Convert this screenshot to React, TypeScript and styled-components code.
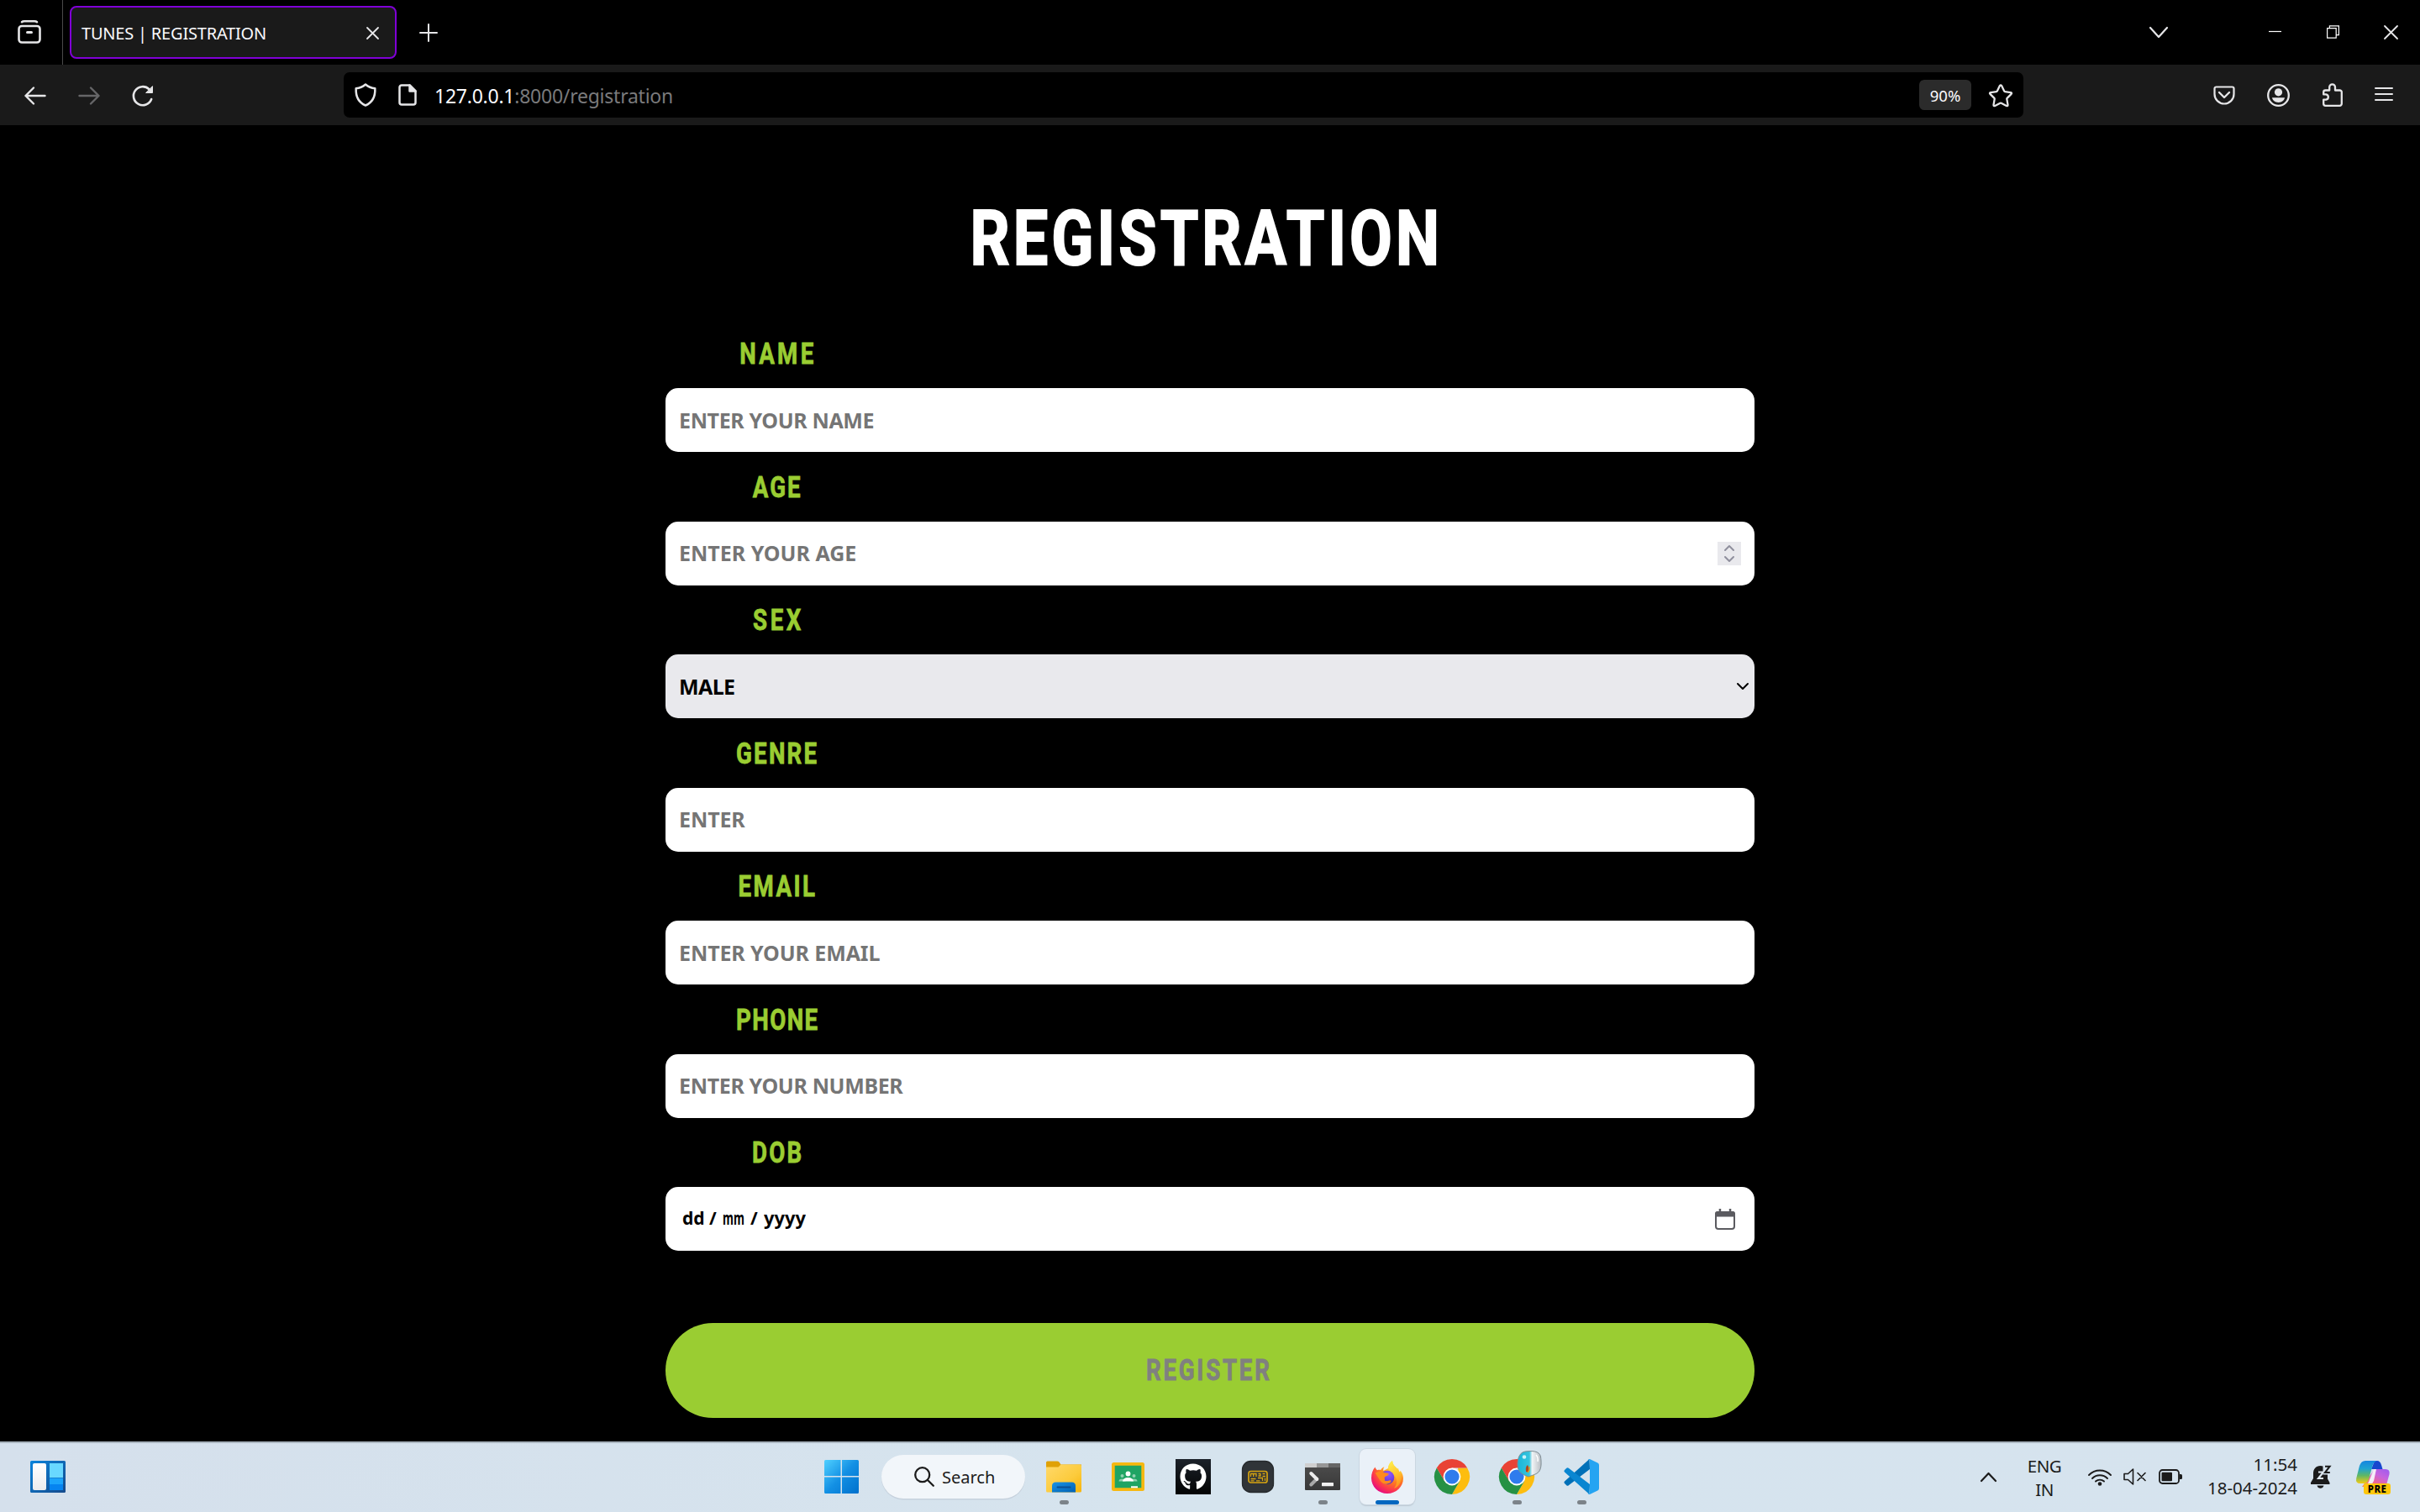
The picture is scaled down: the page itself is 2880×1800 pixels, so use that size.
import React from "react";
import styled, { createGlobalStyle, css } from "styled-components";
import { FaGithub } from "react-icons/fa";

const Global = createGlobalStyle`
  * { box-sizing: border-box; }
  html, body { margin: 0; background: #000; }
  body { font-family: "Noto Sans", "Open Sans", sans-serif; overflow: hidden; }
  svg { display: block; flex: none; overflow: visible; }
`;

const Screen = styled.div`
  width: 2880px;
  height: 1800px;
  display: grid;
  grid-template-rows: 77px 72px 1fr 84px;
  background: #000;
`;

/* ---------- browser chrome ---------- */
const TabBar = styled.header`
  display: flex;
  align-items: center;
  background: #000;
`;
const FirefoxView = styled.div`
  width: 75px;
  height: 77px;
  padding-left: 21px;
  padding-bottom: 1px;
  display: flex;
  align-items: center;
  border-right: 1px solid #4a4a4a;
`;
const Tab = styled.div`
  width: 389px;
  height: 63px;
  margin-left: 8px;
  padding: 2px 19px 0 12px;
  display: flex;
  align-items: center;
  justify-content: space-between;
  border: 2px solid #8000d7;
  border-radius: 8px;
  background: #1a1a1a;
`;
const TabTitle = styled.span`
  padding-top: 1px;
  font-size: 20px;
  letter-spacing: -0.2px;
  line-height: 30px;
  color: #fbfbfe;
`;
const NewTab = styled.div`
  margin-left: 27px;
`;
const WindowControls = styled.div`
  margin-left: auto;
  margin-right: 26px;
  display: flex;
  align-items: center;
`;
const Control = styled.div<{ $before?: number }>`
  margin-left: ${(p) => p.$before ?? 0}px;
  padding-bottom: 1px;
`;
const Toolbar = styled.nav`
  display: flex;
  align-items: center;
  background: #1a1a1a;
  padding: 0 32px 0 29px;
`;
const NavButtons = styled.div`
  display: flex;
  align-items: center;
  gap: 38px;
  width: 380px;
  padding-top: 2px;
`;
const UrlBar = styled.div`
  width: 1999px;
  height: 54px;
  padding: 0 13px 0 13px;
  display: flex;
  align-items: center;
  border-radius: 7px;
  background: #000;
`;
const UrlIcons = styled.div`
  display: flex;
  align-items: center;
  gap: 26px;
  width: 95px;
`;
const Url = styled.span`
  padding-top: 1px;
  font-size: 23px;
  letter-spacing: -0.24px;
  color: #7a7a7c;
`;
const Host = styled.span`
  color: #fbfbfe;
`;
const Zoom = styled.span`
  margin-left: auto;
  width: 62px;
  height: 36px;
  border-radius: 6px;
  background: #2b2b2b;
  color: #fbfbfe;
  font-size: 18.500px;
  line-height: 37px;
  text-align: center;
`;
const StarSlot = styled.div`
  margin-left: 21px;
`;
const ToolbarRight = styled.div`
  margin-left: auto;
  display: flex;
  align-items: center;
  gap: 38.500px;
`;

/* ---------- page ---------- */
const Page = styled.main`
  display: flex;
  flex-direction: column;
  align-items: center;
  padding-top: 66px;
  font-family: Roboto, "Noto Sans", sans-serif;
`;
const Title = styled.h1`
  margin: 0 8px 41px 0;
  font-size: 90px;
  line-height: 140px;
  font-weight: 700;
  letter-spacing: 5px;
  color: #fff;
  -webkit-text-stroke: 2px #fff;
  transform: scaleX(0.818);
`;
const Form = styled.form`
  width: 1296px;
  display: flex;
  flex-direction: column;
`;
const Fields = styled.div`
  display: grid;
  row-gap: 16.500px;
`;
const Field = styled.div`
  display: flex;
  flex-direction: column;
`;
const pixelText = css<{ $track: number }>`
  font-family: Roboto, "Noto Sans", sans-serif;
  font-size: 35px;
  font-weight: 700;
  line-height: 50px;
  letter-spacing: ${(p) => p.$track}px;
  margin-right: -${(p) => p.$track}px;
  -webkit-text-stroke: 0.8px currentColor;
  transform: scaleX(0.79);
`;
const LabelCell = styled.div`
  width: 264px;
  height: 66px;
  padding-top: 1px;
  display: flex;
  justify-content: center;
`;
const Label = styled.label<{ $track: number }>`
  ${pixelText}
  color: #9acd32;
`;
const Box = styled.div<{ $filled?: boolean }>`
  height: 76px;
  padding: 0 23px 0 16px;
  display: flex;
  align-items: center;
  justify-content: space-between;
  border-radius: 15px;
  background: ${(p) => (p.$filled ? "#e9e9ed" : "#fff")};
  ${(p) => p.$filled && "padding-right: 7px;"}
`;
const Value = styled.span<{ $dark?: boolean; $track: number }>`
  padding-bottom: 1px;
  font-family: "Noto Sans", "Open Sans", sans-serif;
  font-size: 25px;
  font-weight: 700;
  letter-spacing: ${(p) => p.$track}px;
  color: ${(p) => (p.$dark ? "#000" : "#757575")};
`;
const Spinner = styled.div`
  width: 28px;
  height: 28px;
  margin-right: -7px;
  display: flex;
  flex-direction: column;
  align-items: center;
  justify-content: center;
  gap: 6px;
  background: #e9e9ed;
`;
const DateValue = styled.span`
  display: flex;
  padding: 0 0 2px 4px;
  font-family: "Noto Sans", "Open Sans", sans-serif;
  font-size: 21px;
  font-weight: 700;
  color: #000;
`;
const DatePart = styled.span<{ $w: number; $squeeze?: number }>`
  display: block;
  width: ${(p) => p.$w}px;
  white-space: pre;
  transform-origin: 0 50%;
  transform: scaleX(${(p) => p.$squeeze ?? 1});
`;
const Submit = styled.button`
  margin-top: 86px;
  height: 113px;
  padding: 1px 6px 0 0;
  border: 0;
  border-radius: 57px;
  background: #9acd32;
  display: flex;
  align-items: center;
  justify-content: center;
  color: #808080;
`;
const SubmitText = styled.span<{ $track: number }>`
  ${pixelText}
`;

/* ---------- taskbar ---------- */
const Taskbar = styled.footer`
  display: flex;
  align-items: center;
  background: linear-gradient(90deg, #d5e0ec, #d6e4ee 50%, #d6e3ee);
  box-shadow: inset 0 2px 0 #a9b4be;
  color: #1b1b1b;
`;
const Widgets = styled.div`
  width: 981px;
  padding-left: 36px;
`;
const SearchPill = styled.div`
  width: 171px;
  height: 52px;
  margin: 0 7px 0 27px;
  padding-left: 39px;
  display: flex;
  align-items: center;
  gap: 9px;
  border-radius: 26px;
  background: #f2f6fa;
  box-shadow: 0 1.5px 0 #c6d1dd;
  font-size: 20px;
`;
const TaskButton = styled.div<{ $active?: boolean }>`
  position: relative;
  width: 66px;
  height: 66px;
  margin: 0 5.5px;
  display: flex;
  align-items: center;
  justify-content: center;
  border-radius: 8px;
  ${(p) => p.$active && "background: #eaf1f8; box-shadow: 0 0 0 1px #cad6e1, 0 2px 1px #bfcad4;"}
`;
const Indicator = styled.i<{ $active?: boolean }>`
  position: absolute;
  bottom: 0;
  left: ${(p) => (p.$active ? 19 : 28)}px;
  width: ${(p) => (p.$active ? 28 : 11)}px;
  height: 5px;
  border-radius: 3px;
  background: ${(p) => (p.$active ? "#0067c0" : "#7c8389")};
`;
const Tray = styled.div`
  margin-left: auto;
  padding-right: 35px;
  display: flex;
  align-items: center;
`;
const TrayText = styled.div<{ $w: number; $right?: boolean; $dy: number }>`
  width: ${(p) => p.$w}px;
  padding-top: ${(p) => Math.max(p.$dy, 0)}px;
  padding-bottom: ${(p) => Math.max(-p.$dy, 0)}px;
  display: flex;
  flex-direction: column;
  align-items: ${(p) => (p.$right ? "flex-end" : "center")};
  font-size: 20.5px;
  line-height: 28px;
  letter-spacing: ${(p) => (p.$right ? 0 : -0.5)}px;
`;
const TraySlot = styled.div<{ $gap: number }>`
  margin-left: ${(p) => p.$gap}px;
`;

const ink = "#e6e6e8";
const line = { fill: "none", strokeLinecap: "round" as const, strokeLinejoin: "round" as const };

const ViewIcon = () => (
  <svg width="28" height="28" viewBox="0 0 28 28" {...line} stroke={ink} strokeWidth="2.6">
    <path d="M5 2.2Q6 1.3 8 1.3h12q2 0 3 .9" />
    <rect x="1.5" y="7" width="25" height="19.5" rx="3.5" />
    <path d="M11.5 14.5h5" strokeWidth="3" />
  </svg>
);
const Cross = ({ s, w = 2 }: { s: number; w?: number }) => (
  <svg width={s} height={s} viewBox={`0 0 ${s} ${s}`} {...line} stroke={ink} strokeWidth={w}>
    <path d={`M1 1L${s - 1} ${s - 1}M${s - 1} 1L1 ${s - 1}`} />
  </svg>
);
const Plus = () => (
  <svg width="22" height="22" viewBox="0 0 22 22" {...line} stroke={ink} strokeWidth="2">
    <path d="M11 1v20M1 11h20" />
  </svg>
);
const Chevron = ({ w, h, up, color, sw }: { w: number; h: number; up?: boolean; color: string; sw: number }) => (
  <svg width={w} height={h} viewBox={`0 0 ${w} ${h}`} {...line} stroke={color} strokeWidth={sw}>
    <path d={up ? `M1 ${h - 1}L${w / 2} 1L${w - 1} ${h - 1}` : `M1 1L${w / 2} ${h - 1}L${w - 1} 1`} />
  </svg>
);
const Minimize = () => (
  <svg width="15" height="16" viewBox="0 0 15 16"><path d="M0 7.500h15" stroke="#fff" strokeWidth="1.2" /></svg>
);
const Restore = () => (
  <svg width="15" height="16" viewBox="0 0 15 16" fill="none" stroke="#fff" strokeWidth="1.2">
    <path d="M.6 3.6h10.6v11.6H.6zM3.4 3.4V.8h11v10.8h-3" />
  </svg>
);
const Arrow = ({ right }: { right?: boolean }) => (
  <svg width="26" height="22" viewBox="0 0 26 22" {...line} stroke={right ? "#666668" : ink} strokeWidth="2.4">
    <path d={right ? "M1.5 11h23M15 1.5l9.5 9.5-9.5 9.5" : "M24.5 11h-23M11 1.5L1.5 11l9.500 9.500"} />
  </svg>
);
const Reload = () => (
  <svg width="26" height="26" viewBox="0 0 26 26" {...line} stroke={ink} strokeWidth="2.6">
    <path d="M23.2 17A11 11 0 1 1 20.5 5.2" />
    <path d="M24.5 2v7.5h-7.5z" fill={ink} stroke={ink} strokeWidth="1" />
  </svg>
);
const Shield = () => (
  <svg width="26" height="28" viewBox="0 0 26 28" {...line} stroke={ink} strokeWidth="2.5">
    <path d="M13 1.500c3.500 3 7 4.300 11.300 4.700.5 9.300-2.300 16.300-11.300 20.300C4 22.500 1.200 15.500 1.700 6.200 6 5.800 9.500 4.500 13 1.500z" />
  </svg>
);
const PageIcon = () => (
  <svg width="22" height="26" viewBox="0 0 22 26" {...line} stroke={ink} strokeWidth="2.5">
    <path d="M4 1.500h9.500l7 7V22a2.500 2.500 0 0 1-2.500 2.500H4A2.500 2.500 0 0 1 1.500 22V4A2.500 2.500 0 0 1 4 1.500z" />
    <path d="M13.500 1.500v7h7z" fill={ink} />
  </svg>
);
const Star = () => (
  <svg width="28" height="27" viewBox="0 0 28 27" {...line} stroke={ink} strokeWidth="2.3">
    <path d="M12.900 2.100q1.100-1.600 2.200 0l3.100 6.400q.3.500.9.600l6.900 1q1.700.4.600 1.800l-5 5q-.4.400-.3 1l1.200 7q0 1.700-1.700 1.100l-6.200-3.300q-.6-.3-1.200 0l-6.200 3.300q-1.700.6-1.700-1.100l1.200-7q.1-.6-.3-1l-5-5q-1.100-1.400.6-1.800l6.900-1q.6-.1.900-.6z" />
  </svg>
);
const Pocket = () => (
  <svg width="26" height="23" viewBox="0 0 26 23" {...line} stroke={ink} strokeWidth="2.2">
    <path d="M3.500 1.500h19a2 2 0 0 1 2 2V10a11.500 11.500 0 0 1-23 0V3.500a2 2 0 0 1 2-2z" />
    <path d="M7 8l6 6 6-6" strokeWidth="2.4" />
  </svg>
);
const Account = () => (
  <svg width="27" height="27" viewBox="0 0 27 27" fill={ink}>
    <circle cx="13.5" cy="13.5" r="12.3" fill="none" stroke={ink} strokeWidth="2.3" />
    <circle cx="13.5" cy="9.8" r="4.6" />
    <path d="M6 16.300h15c-.6 3.300-3.400 5.600-7.500 5.600S6.600 19.600 6 16.300z" />
  </svg>
);
const Extension = () => (
  <svg width="24" height="28" viewBox="0 0 24 28" {...line} stroke={ink} strokeWidth="2.3">
    <path d="M3.500 8.500h4.700V4.800a3.400 3.400 0 0 1 6.800 0v3.700h5.500a2.300 2.300 0 0 1 2.300 2.300v13.700a2.300 2.300 0 0 1-2.300 2.300h-17a2.300 2.300 0 0 1-2.300-2.300v-4.800h3a3.200 3.200 0 0 0 0-6.300h-3v-2.600a2.300 2.300 0 0 1 2.300-2.300z" />
  </svg>
);
const Menu = () => (
  <svg width="22" height="18" viewBox="0 0 22 18" {...line} stroke={ink} strokeWidth="2">
    <path d="M1 1h20M1 8h20M1 15h20" />
  </svg>
);
const Calendar = () => (
  <svg width="24" height="25" viewBox="0 0 24 25">
    <rect x="1" y="4" width="22" height="20" rx="3" fill="none" stroke="#5b5b60" strokeWidth="2" />
    <path d="M0 9.500V6a3 3 0 0 1 3-3h18a3 3 0 0 1 3 3v3.500zM4.700 0h2.500v4H4.700zM16.800 0h2.500v4h-2.500z" fill="#5b5b60" />
  </svg>
);

const WidgetsIcon = () => (
  <svg width="42" height="38" viewBox="0 0 42 38">
    <defs>
      <linearGradient id="wg" x1="0" y1="0" x2="1" y2="1"><stop stopColor="#0a84dc" /><stop offset="1" stopColor="#154a8c" /></linearGradient>
      <linearGradient id="wp" x1="0" y1="0" x2="0" y2="1"><stop stopColor="#fff" /><stop offset="1" stopColor="#ececee" /></linearGradient>
    </defs>
    <rect width="42" height="38" rx="1.5" fill="url(#wg)" />
    <rect x="3" y="3" width="16" height="32" rx="2" fill="url(#wp)" />
    <path d="M23 3h16v17H23z" fill="#69d8ff" />
    <path d="M23 20.500h16V28H23z" fill="#1ba4fb" />
    <path d="M23 28h16v7H23z" fill="#0684f0" />
  </svg>
);
const WindowsIcon = () => (
  <svg width="41" height="40" viewBox="0 0 41 40">
    <defs><linearGradient id="win" gradientUnits="userSpaceOnUse" x1="0" y1="0" x2="41" y2="40"><stop stopColor="#4fd0ff" /><stop offset=".5" stopColor="#1390e4" /><stop offset="1" stopColor="#0070cc" /></linearGradient></defs>
    <path d="M1.500 0H19.500V19H0V1.500Q0 0 1.500 0zM21 0h18.500Q41 0 41 1.500V19H21zM0 20.500h19.500V40h-18Q0 40 0 38.500zM21 20.500h20v18q0 1.500-1.500 1.500H21z" fill="url(#win)" />
  </svg>
);
const SearchGlyph = () => (
  <svg width="24" height="24" viewBox="0 0 24 24" {...line} stroke="#1b1b1b" strokeWidth="2.3">
    <circle cx="9.7" cy="9.7" r="8.5" /><path d="M16 16l6.800 6.800" />
  </svg>
);
const FolderIcon = () => (
  <svg width="42" height="38" viewBox="0 0 42 38">
    <defs>
      <linearGradient id="fo" x1="0" y1="0" x2="1" y2="1"><stop stopColor="#ffd96b" /><stop offset=".6" stopColor="#fccb3c" /><stop offset="1" stopColor="#f7b40c" /></linearGradient>
      <linearGradient id="fb" x1="0" y1="0" x2="1" y2="1"><stop stopColor="#1a93e4" /><stop offset="1" stopColor="#0061b4" /></linearGradient>
    </defs>
    <path d="M0 2Q0 .5 1.500.5H13q1.500 0 2.500 1l2 3H42V14H0z" fill="#e0a106" />
    <path d="M0 7.500h14.500l3-3H40.500q1.500 0 1.500 1.500v30q0 1.500-1.500 1.500h-39Q0 37.500 0 36z" fill="url(#fo)" />
    <path d="M7 37.500V30q0-4.500 4.500-4.500h19Q35 25.500 35 30v7.500z" fill="url(#fb)" />
    <path d="M13.500 31.500h15" stroke="#0a4f93" strokeWidth="2" strokeLinecap="round" />
  </svg>
);
const ClassroomIcon = () => (
  <svg width="39" height="34" viewBox="0 0 39 34">
    <rect width="39" height="34" rx="2.5" fill="#f6b811" />
    <path d="M3.700 3.700h31.600v26.600H3.700z" fill="#1fa463" />
    <g fill="#8fd1b0"><circle cx="12.5" cy="16" r="2" /><circle cx="26.5" cy="16" r="2" /><path d="M8.500 22.500q0-3 4-3t4 3zM22.500 22.500q0-3 4-3t4 3z" /></g>
    <circle cx="19.5" cy="13.5" r="2.9" fill="#fff" /><path d="M13 22.500q.5-4.500 6.500-4.500t6.500 4.500z" fill="#fff" />
    <path d="M23 28.300h8v2h-8z" fill="#fff" />
  </svg>
);
const GithubTile = styled.div`
  width: 42px;
  height: 42px;
  display: flex;
  align-items: center;
  justify-content: center;
  background: linear-gradient(#1b2129, #030303);
  color: #fff;
  font-size: 32px;
`;
const MazeIcon = () => (
  <svg width="38" height="38" viewBox="0 0 38 38" fill="none" stroke="#d6a410" strokeWidth="1.3">
    <rect x=".5" y=".5" width="37" height="37" rx="10" fill="#303438" stroke="#26292c" />
    <rect x="8" y="12.5" width="22" height="13.5" rx="2.5" strokeWidth="1.7" />
    <path d="M10.500 19v-3.500H17V19M13.700 15.500V19M19.500 15.500h3M24.500 15.500h3M19.500 18h2.500v-2.500M24.500 18.500h3.500M10.500 21.500h6M19 20.500h5.500V24M10.500 23.800h4M17 23.800h4.500M27.500 20.500V24" />
  </svg>
);
const TerminalIcon = () => (
  <svg width="42" height="32" viewBox="0 0 42 32">
    <defs><linearGradient id="te" x1="0" y1="0" x2="0" y2="1"><stop stopColor="#4d4d4d" /><stop offset="1" stopColor="#383838" /></linearGradient></defs>
    <rect width="42" height="32" rx="1" fill="url(#te)" />
    <path d="M0 0h14v5H0z" fill="#cfcfcf" /><path d="M14 0h14v5H14z" fill="#969696" /><path d="M28 0h14v5H28z" fill="#666" />
    <path d="M14.300 18.500l-7 7" stroke="#a9a9a9" strokeWidth="4" strokeLinecap="round" />
    <path d="M7.300 12l7 7" stroke="#ececec" strokeWidth="4" strokeLinecap="round" />
    <rect x="20" y="23" width="14" height="4.2" rx=".6" fill="#f0f0f0" />
  </svg>
);
const FirefoxIcon = () => (
  <svg width="38" height="39" viewBox="0 0 38 39">
    <defs>
      <radialGradient id="ff" cx=".78" cy=".12" r="1"><stop stopColor="#fff44f" /><stop offset=".3" stopColor="#ffbd2e" /><stop offset=".55" stopColor="#ff7a20" /><stop offset=".8" stopColor="#fb3450" /><stop offset="1" stopColor="#e30587" /></radialGradient>
      <radialGradient id="fp" cx=".6" cy=".25" r=".8"><stop stopColor="#9059ff" /><stop offset=".6" stopColor="#6f3fe0" /><stop offset="1" stopColor="#5436a8" /></radialGradient>
      <linearGradient id="fl" x1="0" y1="0" x2=".3" y2="1"><stop stopColor="#fff44f" /><stop offset=".6" stopColor="#ffc52e" /><stop offset="1" stopColor="#ff9a20" /></linearGradient>
    </defs>
    <path d="M4.500 7.500c.5 1.800 1.500 3 2.500 3.700 1.500-.5 3-.5 4.200-.2C12.300 9 14 7.800 15.500 7.300 14.300 9 14 10.500 14.400 12L20 9c.3-3.500 2.300-7 5-9 .3 3.500 1.700 5.500 4 7.500l1.500 3.300L32 8.500l1 5 1.800-1.500C37 15 38 18 38 21 38 31 29.500 39 19 39S0 31 0 20.500C0 15.500 1.500 11 4.500 7.500z" fill="url(#ff)" />
    <path d="M25 0c.3 3.500 1.700 5.500 4 7.500 3.800 3.500 6.500 8 6.300 13.500-.3 6.500-4.300 10.500-8.300 12 4-5 4.500-11.500.5-15.500C24 14 20 12 20 8c.5-3.500 2.500-6.300 5-8z" fill="url(#fl)" />
    <circle cx="19" cy="20" r="8.3" fill="url(#fp)" />
    <path d="M4.500 14.500c3-2 6.500-2 9.500-.8l6 1.300c1 .3.800 1.800-.5 2.500-2 1-3.500 1.300-3.800 2.500-.2 1.300.6 2 .2 3.500 2 1.200 4.500.2 6.300-.3 1.500-.3 1.800 1.300.8 2.300-2.500 2.300-6.500 3-9.500 1-3.500-2.500-6-8-9-12z" fill="#ff8a1c" />
  </svg>
);
const Chrome = () => (
  <g>
    <path d="M39.200 10.500A21 21 0 0 1 21 42l9.100-15.800L28 10.500z" fill="#fdbd0f" />
    <path d="M2.800 10.500L11.900 26.200 21 10.500h18.200A21 21 0 0 0 2.800 10.500z" fill="#e94235" />
    <path d="M2.800 10.500A21 21 0 0 0 21 42l9.100-15.700H12z" fill="#269144" />
    <circle cx="21" cy="21" r="10.4" fill="#fff" /><circle cx="21" cy="21" r="8.6" fill="#2f7ced" />
  </g>
);
const ChromeIcon = ({ badge }: { badge?: boolean }) => (
  <svg width="42" height="42" viewBox="0 0 42 42">
    <Chrome />
    {badge && (
      <g>
        <defs><linearGradient id="cb"><stop stopColor="#19b5d8" /><stop offset=".5" stopColor="#35c4de" /><stop offset=".62" stopColor="#f1f4f6" /><stop offset="1" stopColor="#b8bec4" /></linearGradient></defs>
        <path d="M31-9c8-1 17-1 18.500 6 1 7 1 14-2 18-3 3.500-8 4-12.500 6-5-2-11-4-12.500-10C21 3 23-8 31-9z" fill="url(#cb)" stroke="#7e8c93" strokeWidth="1" />
        <circle cx="30" cy="-2.5" r="2.3" fill="#e8fbff" opacity=".85" />
        <path d="M32 15q-1-6 2-8 2 3 1 9z" fill="#b3471c" /><path d="M34 16q3-3 2-7" stroke="#d8a528" strokeWidth="1.5" fill="none" />
        <path d="M44-5q3 3 2 8" stroke="#fff" strokeWidth="1.5" fill="none" />
      </g>
    )}
  </svg>
);
const CodeIcon = () => (
  <svg width="42" height="42" viewBox="0 0 42 42">
    <path d="M30.500 0L1 26.500q-1.400 1.300 0 2.600l2.300 2.200q1.200 1 2.500 0L31 12z" fill="#0070b8" />
    <path d="M30.500 42L1 15.500q-1.400-1.300 0-2.600l2.300-2.200q1.200-1 2.500 0L31 30z" fill="#0a86d1" />
    <path d="M28.500 41.500q1.500.9 3 .2l8.800-4.200Q42 36.700 42 35V7q0-1.700-1.700-2.500L31.500.3q-1.500-.7-3 .2Q31 0 31 3v36q0 3-2.500 2.500z" fill="#25a4f2" />
  </svg>
);
const Wifi = () => (
  <svg width="28" height="21" viewBox="0 0 28 21" {...line} stroke="#1b1b1b" strokeWidth="1.9">
    <path d="M1 8a18.200 18.200 0 0 1 26 0M5 12a12.600 12.600 0 0 1 18 0M9 15.500a7.500 7.500 0 0 1 10 0" />
    <circle cx="14" cy="18.5" r="2.3" fill="#1b1b1b" stroke="none" />
  </svg>
);
const Muted = () => (
  <svg width="27" height="20" viewBox="0 0 27 20" {...line} stroke="#1b1b1b" strokeWidth="1.6">
    <path d="M1 6.500h4.500L11.500 1v18l-6-5.500H1zM17 5.500l9 9M26 5.500l-9 9" />
  </svg>
);
const Battery = () => (
  <svg width="28" height="18" viewBox="0 0 28 18">
    <rect x="1" y="1" width="23" height="16" rx="3.5" fill="none" stroke="#1b1b1b" strokeWidth="1.8" />
    <path d="M25 6h1.500q1.500 0 1.500 1.500v3q0 1.500-1.500 1.500H25z" fill="#1b1b1b" /><rect x="3.5" y="3.7" width="12.5" height="10.6" rx="1" fill="#1b1b1b" />
  </svg>
);
const BellWrap = styled.div`
  position: relative;
  width: 24px;
  height: 27px;
  margin-left: 16px;
`;
const BellIcon = () => (
  <svg width="24" height="27" viewBox="0 0 24 27">
    <path d="M11.500 0C6 0 3 4 3 9v6L0 20v2h22.500v-2L20 15.500V9Q19 0 11.500 0zM7.500 23.500h8q-1 3.300-4 3.300t-4-3.300z" fill="#1b1b1b" />
    <path d="M14.500-1.500h10v12h-10z" fill="#d6e3ee" />
    <g fill="none" strokeLinejoin="miter">
      <path d="M9 7.500h6l-6 7.500h6" stroke="#dfe9f2" strokeWidth="2.1" />
      <path d="M17 .8h5.500L17 8h5.800" stroke="#1b1b1b" strokeWidth="2.1" />
    </g>
  </svg>
);
const CopilotWrap = styled.div`
  position: relative;
  width: 41px;
  height: 39px;
  margin-left: 30px;
`;
const Pre = styled.span`
  position: absolute;
  left: 9px;
  bottom: -1px;
  width: 32px;
  height: 13px;
  border-radius: 3px;
  background: #fdc70c;
  color: #000;
  font: 800 11.5px/13px "Noto Sans", sans-serif;
  letter-spacing: 0.4px;
  text-align: center;
`;
const CopilotIcon = () => (
  <svg width="41" height="39" viewBox="0 0 41 39">
    <defs>
      <linearGradient id="c1" x1="0" y1="0" x2="0" y2="1"><stop stopColor="#1585e0" /><stop offset=".35" stopColor="#1fa3d0" /><stop offset=".65" stopColor="#5fb765" /><stop offset="1" stopColor="#f3cb12" /></linearGradient>
      <linearGradient id="c2" x1="1" y1="0" x2=".2" y2="1"><stop stopColor="#9b5bf0" /><stop offset=".4" stopColor="#c763dd" /><stop offset=".75" stopColor="#f0688f" /><stop offset="1" stopColor="#ff8055" /></linearGradient>
    </defs>
    <path d="M22 0h3q3.500 0 5 5l1.500 5H18z" fill="#1747cf" />
    <path d="M22 10h13q5.500 0 4.500 6l-3 11q-1 4-4.500 4H7z" fill="url(#c2)" />
    <path d="M24 10h-3l-6 15q-1 3-4 3h6q3-1 4-4z" fill="#f5eef8" />
    <path d="M11 0h14q-4 1-5.500 6L15 22q-1.500 5-5 5H5q-6 0-4.800-6L4 6Q6 0 11 0z" fill="url(#c1)" />
  </svg>
);

type Row = { label: string; track: number; value: string; valueTrack: number; kind?: "number" | "select" | "date" };
const rows: Row[] = [
  { label: "NAME", track: 4.2, value: "ENTER YOUR NAME", valueTrack: -0.36 },
  { label: "AGE", track: 2.6, value: "ENTER YOUR AGE", valueTrack: 0, kind: "number" },
  { label: "SEX", track: 4.5, value: "MALE", valueTrack: -0.6, kind: "select" },
  { label: "GENRE", track: 2.8, value: "ENTER", valueTrack: -0.1 },
  { label: "EMAIL", track: 3.1, value: "ENTER YOUR EMAIL", valueTrack: -0.1 },
  { label: "PHONE", track: 1.75, value: "ENTER YOUR NUMBER", valueTrack: -0.34 },
  { label: "DOB", track: 2.7, value: "", valueTrack: 0, kind: "date" },
];

function FieldBox({ row }: { row: Row }) {
  if (row.kind === "date")
    return (
      <Box>
        <DateValue>
          <DatePart $w={32}>dd</DatePart>
          <DatePart $w={16}>/</DatePart>
          <DatePart $w={33} $squeeze={0.63}>mm</DatePart>
          <DatePart $w={16}>/</DatePart>
          <DatePart $w={50} $squeeze={1.04}>yyyy</DatePart>
        </DateValue>
        <Calendar />
      </Box>
    );
  return (
    <Box $filled={row.kind === "select"}>
      <Value $track={row.valueTrack} $dark={row.kind === "select"}>{row.value}</Value>
      {row.kind === "number" && (
        <Spinner>
          <Chevron w={12} h={7} up color="#8f8f9d" sw={2} />
          <Chevron w={12} h={7} color="#8f8f9d" sw={2} />
        </Spinner>
      )}
      {row.kind === "select" && <Chevron w={14} h={8} color="#000" sw={2} />}
    </Box>
  );
}

const apps: { icon: React.ReactNode; open?: boolean; active?: boolean }[] = [
  { icon: <FolderIcon />, open: true },
  { icon: <ClassroomIcon /> },
  { icon: <GithubTile><FaGithub /></GithubTile> },
  { icon: <MazeIcon /> },
  { icon: <TerminalIcon />, open: true },
  { icon: <FirefoxIcon />, open: true, active: true },
  { icon: <ChromeIcon /> },
  { icon: <ChromeIcon badge />, open: true },
  { icon: <CodeIcon />, open: true },
];

export default function App() {
  return (
    <Screen>
      <Global />
      <TabBar>
        <FirefoxView><ViewIcon /></FirefoxView>
        <Tab><TabTitle>TUNES | REGISTRATION</TabTitle><Cross s={15} w={1.8} /></Tab>
        <NewTab><Plus /></NewTab>
        <WindowControls>
          <Control><Chevron w={22} h={13} color={ink} sw={2.2} /></Control>
          <Control $before={120}><Minimize /></Control>
          <Control $before={54}><Restore /></Control>
          <Control $before={53}><Cross s={17} w={1.8} /></Control>
        </WindowControls>
      </TabBar>
      <Toolbar>
        <NavButtons><Arrow /><Arrow right /><Reload /></NavButtons>
        <UrlBar>
          <UrlIcons><Shield /><PageIcon /></UrlIcons>
          <Url><Host>127.0.0.1</Host>:8000/registration</Url>
          <Zoom>90%</Zoom>
          <StarSlot><Star /></StarSlot>
        </UrlBar>
        <ToolbarRight><Pocket /><Account /><Extension /><Menu /></ToolbarRight>
      </Toolbar>
      <Page>
        <Title>REGISTRATION</Title>
        <Form>
          <Fields>
            {rows.map((row) => (
              <Field key={row.label}>
                <LabelCell><Label $track={row.track}>{row.label}</Label></LabelCell>
                <FieldBox row={row} />
              </Field>
            ))}
          </Fields>
          <Submit type="button"><SubmitText $track={3.5}>REGISTER</SubmitText></Submit>
        </Form>
      </Page>
      <Taskbar>
        <Widgets><WidgetsIcon /></Widgets>
        <WindowsIcon />
        <SearchPill><SearchGlyph />Search</SearchPill>
        {apps.map((a, i) => (
          <TaskButton key={i} $active={a.active}>
            {a.icon}
            {a.open && <Indicator $active={a.active} />}
          </TaskButton>
        ))}
        <Tray>
          <Chevron w={19} h={11} up color="#1b1b1b" sw={2.2} />
          <TraySlot $gap={37}>
            <TrayText $w={40} $dy={2}><span>ENG</span><span>IN</span></TrayText>
          </TraySlot>
          <TraySlot $gap={32}><Wifi /></TraySlot>
          <TraySlot $gap={14}><Muted /></TraySlot>
          <TraySlot $gap={15}><Battery /></TraySlot>
          <TraySlot $gap={27}>
            <TrayText $w={110} $right $dy={-2}><span>11:54</span><span>18-04-2024</span></TrayText>
          </TraySlot>
          <BellWrap><BellIcon /></BellWrap>
          <CopilotWrap><CopilotIcon /><Pre>PRE</Pre></CopilotWrap>
        </Tray>
      </Taskbar>
    </Screen>
  );
}
